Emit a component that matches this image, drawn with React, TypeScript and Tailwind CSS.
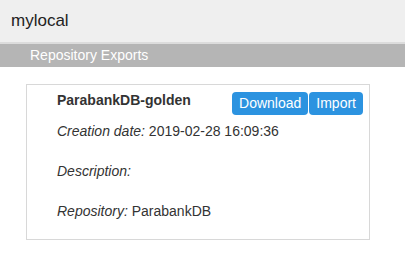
export default function App() {
  return (
    <div className="min-h-screen bg-white text-[#333] font-['Liberation_Sans',Arial,sans-serif]">
      {/* Top header */}
      <div className="h-[42px] bg-[#efefef] border-b-2 border-[#dcdcdc] box-content flex items-center pl-[11px]">
        <span className="text-[17px] text-[#222]">mylocal</span>
      </div>

      {/* Section bar */}
      <div className="h-[23px] bg-[#b5b5b5] flex items-center pl-[30px]">
        <span className="text-[14px] text-white">Repository Exports</span>
      </div>

      {/* Export card */}
      <div className="pl-[26px] pt-[17px]">
        <div className="w-[344px] h-[156px] border border-[#d8d8d8] pt-[5px] pr-[6px] pl-[30px] pb-[18px]">
          <div className="flex items-start justify-between">
            <span className="text-[14px] leading-[20px] font-bold text-[#333]">ParabankDB-golden</span>
            <div className="flex gap-[1px] mt-[2px]">
              <button className="h-[23px] px-[7px] rounded-[4px] bg-[#2c93e0] text-white text-[14px] leading-[23px]">
                Download
              </button>
              <button className="h-[23px] px-[7px] rounded-[4px] bg-[#2c93e0] text-white text-[14px] leading-[23px]">
                Import
              </button>
            </div>
          </div>
          <div className="flex flex-col gap-[20px] mt-[6px] text-[14px] leading-[20px]">
            <div>
              <i>Creation date:</i> 2019-02-28 16:09:36
            </div>
            <div>
              <i>Description:</i>
            </div>
            <div>
              <i>Repository:</i> ParabankDB
            </div>
          </div>
        </div>
      </div>
    </div>
  );
}
